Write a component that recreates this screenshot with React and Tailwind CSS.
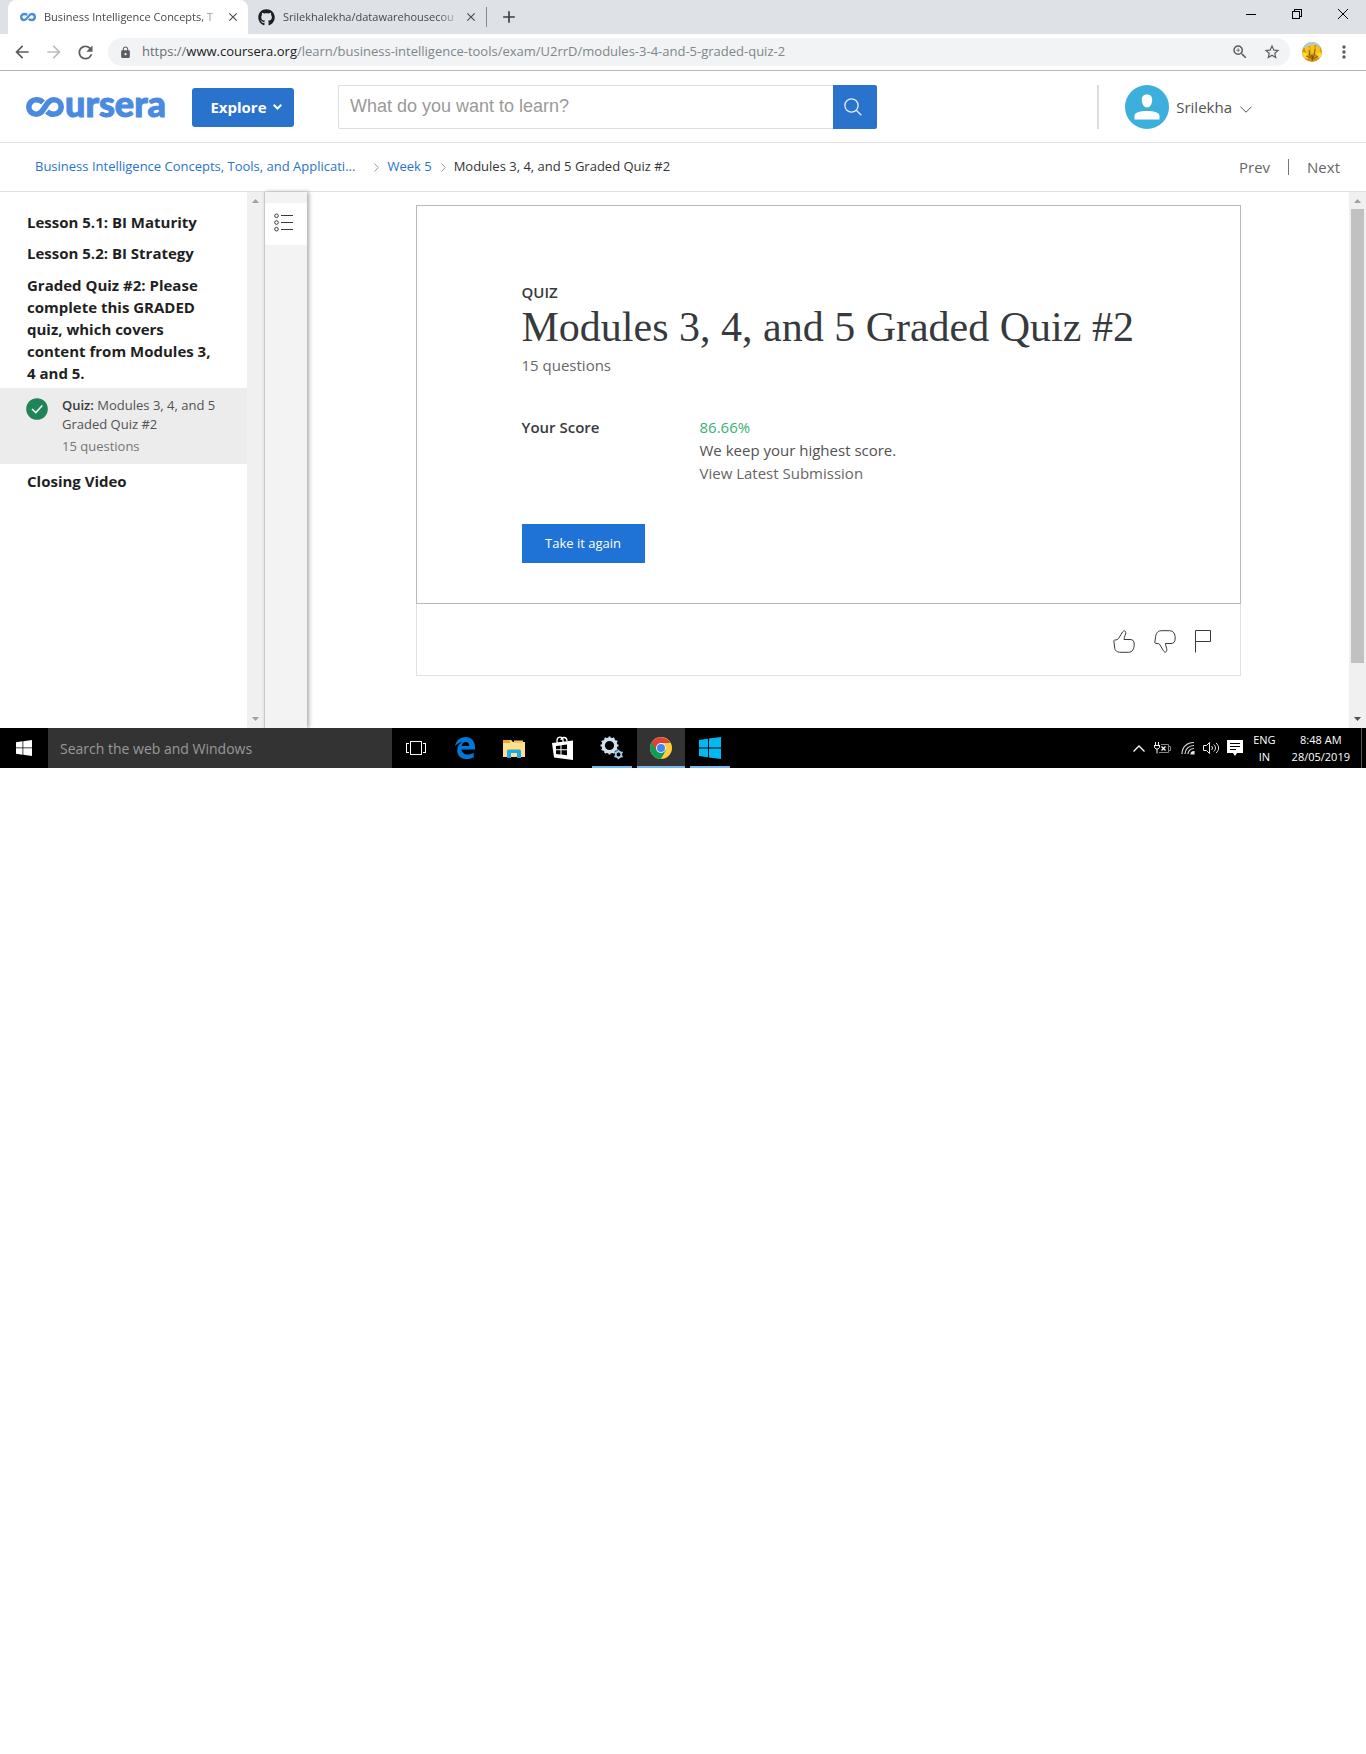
import React from "react";
import {
  MdArrowBack,
  MdArrowForward,
  MdRefresh,
  MdLock,
  MdZoomIn,
  MdStarBorder,
  MdMoreVert,
  MdClose,
  MdAdd,
} from "react-icons/md";
import { FaGithub } from "react-icons/fa";

const sans = "font-['Open_Sans',sans-serif]";

function Infinity({ className }) {
  return (
    <svg className={className} viewBox="0 0 38 20" fill="none" stroke="currentColor" strokeWidth="5.6" aria-hidden="true">
      <path d="M17 5.400C15.200 3.600 13 2.800 10.400 2.800C6 2.800 2.800 5.900 2.800 10C2.800 14.100 6 17.200 10.400 17.200C18.600 17.200 19.400 2.800 27.600 2.800C32 2.800 35.200 5.900 35.200 10C35.200 14.100 32 17.200 27.600 17.200C25 17.200 22.800 16.200 21 14.400" />
    </svg>
  );
}

function Tab({ icon, title, active }) {
  return (
    <div
      className={
        active
          ? "flex h-[34px] w-60 items-center rounded-t-lg bg-white pr-2 pl-3"
          : "flex h-[34px] w-[238px] items-center pr-2 pl-[10px]"
      }
    >
      {icon}
      <span className="ml-2 min-w-0 flex-1 overflow-hidden text-[11px] whitespace-nowrap text-[#45484c] [mask-image:linear-gradient(to_right,black_88%,transparent)]">
        {title}
      </span>
      <button aria-label={"Close " + title} className="ml-1 text-[#4a4d51]">
        <MdClose size={14} />
      </button>
    </div>
  );
}

function BrowserChrome() {
  return (
    <header>
      <div className="flex h-[34px] bg-[#dee1e6] pl-2">
        <Tab active title="Business Intelligence Concepts, T" icon={<Infinity className="h-4 w-4 shrink-0 text-[#4a8fd4]" />} />
        <Tab title="Srilekhalekha/datawarehousecou" icon={<FaGithub size={17} className="shrink-0 text-[#1b1f23]" />} />
        <div className="my-auto h-5 w-px bg-[#85888c]" />
        <button aria-label="New tab" className="ml-3 text-[#3c4043]">
          <MdAdd size={20} />
        </button>
        <div className="ml-auto flex h-7">
          <button aria-label="Minimize" className="flex w-[46px] items-center justify-center">
            <svg width="10" height="10" stroke="#000" shapeRendering="crispEdges"><path d="M0 5.500H10" /></svg>
          </button>
          <button aria-label="Restore" className="flex w-[46px] items-center justify-center">
            <svg width="10" height="10" fill="none" stroke="#000" shapeRendering="crispEdges"><path d="M.5 2.500H7.500V9.500H.5ZM2.500 2.500V.5H9.500V7.500H7.500" /></svg>
          </button>
          <button aria-label="Close window" className="flex w-[46px] items-center justify-center">
            <svg width="10" height="10" stroke="#000"><path d="M0 0L10 10M10 0L0 10" /></svg>
          </button>
        </div>
      </div>
      <div className="box-content flex h-9 items-center border-b border-[#b4b5b7] bg-white px-3 text-[#5a5d61]">
        <button aria-label="Back"><MdArrowBack size={20} /></button>
        <button aria-label="Forward" className="ml-3 text-[#bcbec1]"><MdArrowForward size={20} /></button>
        <button aria-label="Reload" className="ml-[11px]"><MdRefresh size={21} /></button>
        <div className="ml-3 flex h-7 min-w-0 flex-1 items-center rounded-full bg-[#f1f3f4] pr-[9px] pl-[11px]">
          <MdLock size={13} className="shrink-0" />
          <div role="textbox" aria-label="Address" className="ml-[10px] flex-1 truncate text-[13px] text-[#80868b]">
            <span className="text-[#6b6f73]">https://</span>
            <span className="text-[#202124]">www.coursera.org</span>
            /learn/business-intelligence-tools/exam/U2rrD/modules-3-4-and-5-graded-quiz-2
          </div>
          <button aria-label="Zoom"><MdZoomIn size={18} /></button>
          <button aria-label="Bookmark" className="ml-[14px]"><MdStarBorder size={18} /></button>
        </div>
        <button aria-label="Profile" className="ml-3">
          <svg width="20" height="20" viewBox="0 0 20 20">
            <clipPath id="flower"><circle cx="10" cy="10" r="10" /></clipPath>
            <g clipPath="url(#flower)">
              <rect width="20" height="20" fill="#d8930f" />
              <path d="M0 0H20V7L14 3L8 4L0 7Z" fill="#a9cbe6" />
              <path d="M3 8C2 4 8 3 8 8L6 13ZM8 3L12 2L13 11L9 12ZM14 4C18 3 20 9 17 13L13 12Z" fill="#f7c418" />
              <path d="M0 10L5 11L6 17L2 16ZM14 12L20 10L18 17Z" fill="#ffd92b" />
              <path d="M7 8L8 15M13 7L12 14M4 14L9 16M16 14L11 17" stroke="#8f5c06" />
              <path d="M9 13L12 14L10 20Z" fill="#6b5a10" />
            </g>
          </svg>
        </button>
        <button aria-label="Menu" className="ml-3"><MdMoreVert size={20} /></button>
      </div>
    </header>
  );
}

function SiteHeader() {
  return (
    <div className="flex items-center border-b border-[#e1e1e1] pt-[14px] pr-[114px] pb-[13px] pl-[26px]">
      <a href="#home" aria-label="coursera" className="flex h-11 items-center text-[#4a8ae0]">
        <Infinity className="h-5 w-[38px]" />
        <span className="pb-[9px] pl-px font-['Lato',sans-serif] text-[36px] leading-9 font-black [-webkit-text-stroke:1px_currentColor]">ursera</span>
      </a>
      <button className="ml-[26px] flex h-[39px] w-[102px] items-center justify-center gap-1.5 rounded-[3px] bg-[#2a73cc] pl-1.5 text-[15px] font-bold text-white">
        Explore
        <svg width="9" height="6" viewBox="0 0 9 6" fill="none" stroke="currentColor" strokeWidth="2"><path d="M.7 .8L4.500 4.500L8.300 .8" /></svg>
      </button>
      <form className="ml-11 flex h-11 w-[539px] min-w-0">
        <input
          aria-label="Search"
          placeholder="What do you want to learn?"
          className="min-w-0 flex-1 rounded-l-xs border border-r-0 border-[#dedede] px-[11px] pb-0.5 font-['Liberation_Sans',sans-serif] text-lg placeholder:text-[#9a9a9a]"
        />
        <button type="button" aria-label="Submit search" className="flex w-11 items-center justify-center rounded-r-xs bg-[#2a73cc] pr-1">
          <svg width="18" height="18" viewBox="0 0 18 18" fill="none" stroke="#e5eefa" strokeWidth="1.300"><circle cx="7.500" cy="7.500" r="6.600" /><path d="M12 12L17.300 17.300" /></svg>
        </button>
      </form>
      <div className="ml-auto h-11 w-0.5 bg-[#dedede]" />
      <button className="ml-[26px] flex items-center text-[15px] text-[#525252]">
        <svg width="44" height="44" viewBox="0 0 44 44">
          <circle cx="22" cy="22" r="22" fill="#3cafdc" />
          <path d="M22 9.500C25.500 9.500 27.300 11.600 27.200 15C27.100 19 25 22.500 22 22.500C19 22.500 16.900 19 16.800 15C16.700 11.600 18.500 9.500 22 9.500ZM9.500 34.500V31C9.500 27.500 14 26 22 26C30 26 34.500 27.500 34.500 31V34.500Z" fill="#fff" />
        </svg>
        <span className="ml-[7px]">Srilekha</span>
        <svg className="mt-1 ml-2" width="12" height="7" viewBox="0 0 12 7" fill="none" stroke="currentColor" strokeWidth="1"><path d="M.5 .8L6 6.200L11.500 .8" /></svg>
      </button>
    </div>
  );
}

function Crumb() {
  return (
    <svg width="5" height="9" viewBox="0 0 5 9" fill="none" stroke="#9b9b9b" aria-hidden="true"><path d="M.5 .5L4.300 4.500L.5 8.500" /></svg>
  );
}

function Breadcrumbs() {
  return (
    <nav className="box-content flex h-12 items-center border-b border-[#e1e1e1] pr-[26px] pl-[35px] text-[13px] text-[#333]">
      <a href="#course" className="text-[#2a73cc]">Business Intelligence Concepts, Tools, and Applicati...</a>
      <span className="mr-2 ml-[19px]"><Crumb /></span>
      <a href="#week" className="text-[#2a73cc]">Week 5</a>
      <span className="mr-2 ml-[9px]"><Crumb /></span>
      <span>Modules 3, 4, and 5 Graded Quiz #2</span>
      <a href="#prev" className="ml-auto text-[15px] text-[#666]">Prev</a>
      <span className="mx-[18px] h-4 w-px bg-[#757575]" />
      <a href="#next" className="text-[15px] text-[#666]">Next</a>
    </nav>
  );
}

function Arrow({ up, dark }) {
  return (
    <svg width="17" height="17" viewBox="0 0 17 17" fill={dark ? "#505050" : "#a0a0a0"} aria-hidden="true">
      {up ? <path d="M5 11L8.500 7L12 11Z" /> : <path d="M5 6L8.500 10L12 6Z" />}
    </svg>
  );
}

function Sidebar() {
  return (
    <aside className="flex w-[307px] shrink-0">
      <div className="min-w-0 flex-1 pt-[19px] text-[15px] leading-[22px] font-bold text-[#1f1f1f]">
        <p className="px-[27px]">Lesson 5.1: BI Maturity</p>
        <p className="mt-[9px] px-[27px]">Lesson 5.2: BI Strategy</p>
        <p className="mt-[10px] px-[27px]">Graded Quiz #2: Please complete this GRADED quiz, which covers content from Modules 3, 4 and 5.</p>
        <a href="#quiz" className="mt-1 flex bg-[#ececec] py-2 pr-5 pl-[26px] text-[13px] leading-[19px] font-normal text-[#525252]">
          <svg className="mt-0.5 shrink-0" width="22" height="22" viewBox="0 0 22 22" fill="none"><circle cx="11" cy="11" r="10.800" fill="#208556" /><path d="M6 11L9.800 14.600L16.300 7.500" stroke="#fff" strokeWidth="1.500" /></svg>
          <span className="ml-[14px]">
            <b className="font-semibold text-[#373a3c]">Quiz:</b> Modules 3, 4, and 5 Graded Quiz #2
            <span className="mt-[3px] block text-[#757575]">15 questions</span>
          </span>
        </a>
        <p className="mt-[6px] px-[27px]">Closing Video</p>
      </div>
      <div className="flex flex-col justify-between bg-[#f0f0f0]">
        <Arrow up />
        <Arrow />
      </div>
      <div className="w-[43px] border-l border-[#c8c8c8] bg-[#f3f3f3] pt-[11px] shadow-[2px_0_4px_#aaa]">
        <button aria-label="Outline" className="flex h-[42px] w-full items-start justify-center rounded-xs bg-white pt-[10px] pr-1">
          <svg width="20" height="19" viewBox="0 0 20 19" fill="none" stroke="#373a3c">
            <circle cx="2.500" cy="2.800" r="1.800" /><circle cx="2.500" cy="9.500" r="1.800" /><circle cx="2.500" cy="16.200" r="1.800" />
            <path d="M7 2.500H19M7 9.500H19M7 16.500H19" />
          </svg>
        </button>
      </div>
    </aside>
  );
}

function QuizPanel() {
  return (
    <main className="min-w-0 flex-1 pt-[13px]">
      <div className="mx-auto max-w-[825px]">
        <section className="border border-[#bababa] px-[105px] pt-[76px] pb-10 text-[15px] text-[#373a3c]">
          <h2 className="leading-[21px] font-semibold">QUIZ</h2>
          <h1 className="font-['Liberation_Serif',serif] text-[42px] leading-[48px] whitespace-nowrap">Modules 3, 4, and 5 Graded Quiz #2</h1>
          <p className="mt-0.5 leading-6 text-[#666]">15 questions</p>
          <dl className="mt-[39px] flex leading-[23px]">
            <dt className="w-[178px] font-semibold">Your Score</dt>
            <dd>
              <p className="text-[#3ab176]">86.66%</p>
              <p className="text-[#525252]">We keep your highest score.</p>
              <a href="#submission" className="block text-[#666]">View Latest Submission</a>
            </dd>
          </dl>
          <button className="mt-[39px] flex h-[39px] w-[123px] items-center justify-center bg-[#2073d6] text-[13px] font-medium text-white">Take it again</button>
        </section>
        <div className="flex h-[72px] items-center justify-end gap-[19px] border border-t-0 border-[#e1e1e1] pt-1 pr-7 text-[#373a3c]">
          <button aria-label="Like">
            <svg width="22" height="23" viewBox="0 0 22 23" fill="none" stroke="currentColor"><path d="M.8 10.500C1 9.600 4 10.600 5.500 8.600L9.500 2C10.500 .2 12.800 .8 12.800 2.500C12.800 4.500 11.300 6.500 11 9.500H17C20 9.500 21.200 11 21.200 14C21.200 19 19.500 22.300 15.500 22.300H8C4 22.300 1.800 21 1.600 17Z" /></svg>
          </button>
          <button aria-label="Dislike">
            <svg width="22" height="23" viewBox="0 0 22 23" fill="none" stroke="currentColor"><path d="M.8 12.800L1.600 6.500C2.500 2 4.500 .7 8 .7H15.500C19.500 .7 21.200 4 21.200 8C21.200 11.500 20 13.500 17 13.500H11.500C11.500 16 13 18 12.800 20C12.600 22.600 10.500 22.800 9.500 20.800L5.500 14.200C4.500 12.800 1.500 14 .8 12.800Z" /></svg>
          </button>
          <button aria-label="Flag">
            <svg width="17" height="23" viewBox="0 0 17 23" fill="none" stroke="currentColor"><path d="M.5 22.500V.5H15.500V11.500H.5" /></svg>
          </button>
        </div>
      </div>
    </main>
  );
}

function TaskButton({ label, children, state }) {
  return (
    <button
      aria-label={label}
      className={"flex h-10 w-12 flex-col items-center " + (state === "active" ? "bg-[#333]" : "")}
    >
      <span className="flex flex-1 items-center">{children}</span>
      {state && <span className={"-mt-0.5 h-0.5 bg-[#76b9ed] " + (state === "active" ? "w-12" : "w-10")} />}
    </button>
  );
}

function WindowsMark({ size, fill }) {
  return (
    <svg width={size} height={size} viewBox="0 0 22 22" fill={fill}><path d="M0 3L9 1.800V10.400H0ZM10 1.600L22 0V10.400H10ZM0 11.500H9V20.200L0 19ZM10 11.500H22V22L10 20.400Z" /></svg>
  );
}

const teeth = [0, 30, 60, 90, 120, 150, 180, 210, 240, 270, 300, 330];

function Gears() {
  return (
    <svg width="24" height="24" viewBox="0 0 24 24" fill="none">
      <g stroke="#cfe0ee">
        <circle cx="9.500" cy="9.500" r="6.300" strokeWidth="3.400" />
        {teeth.map((a) => <path key={a} d="M9.500 .5V3" strokeWidth="2" transform={`rotate(${a} 9.500 9.500)`} />)}
      </g>
      <g stroke="#a9cbe6">
        <circle cx="18.500" cy="18.500" r="2.800" strokeWidth="1.700" />
        {teeth.filter((a) => a % 60 === 0).map((a) => <path key={a} d="M18.500 13.800V15.500" strokeWidth="1.800" transform={`rotate(${a} 18.500 18.500)`} />)}
      </g>
    </svg>
  );
}

function Taskbar() {
  return (
    <footer className="flex h-10 items-center bg-black text-white">
      <button aria-label="Start" className="flex w-12 shrink-0 justify-center"><WindowsMark size={16} fill="#fff" /></button>
      <input aria-label="Search the web and Windows" placeholder="Search the web and Windows" className="h-10 w-[344px] bg-[#333] px-3 text-sm placeholder:text-[#999]" />
      <div className="flex gap-px">
        <TaskButton label="Task view">
          <svg width="20" height="14" fill="none" stroke="#fff" shapeRendering="crispEdges"><path d="M4.500 .5H15.500V13.500H4.500ZM3 2.500H.5V11.500H3M17 2.500H19.500V11.500H17" /></svg>
        </TaskButton>
        <TaskButton label="Edge">
          <svg width="20" height="22" viewBox="0 0 20 22" fill="#0078d7"><path d="M0 9.500C1 3.500 5 0 10.500 0C16.500 0 20 4.500 20 10V12.500H6.500C6.800 16 9.500 17.600 12.600 17.600C15 17.600 17 16.900 18.700 15.800V20.200C16.600 21.400 14.400 22 11.800 22C6 22 2.200 18.600 2.200 13.200C2.200 9.500 4.200 6.500 7.500 5C4.200 5.200 1.600 7 0 9.500ZM6.600 9H14.300C14.200 6.600 13 5 10.700 5C8.400 5 7 6.700 6.600 9Z" /></svg>
        </TaskButton>
        <TaskButton label="File Explorer">
          <svg width="22" height="19" viewBox="0 0 22 19"><path d="M0 1H8L10 3H22V18H0Z" fill="#ffe08a" /><path d="M0 1H7V4H0Z" fill="#e8a92e" /><path d="M11 1.500H20V4H11Z" fill="#f4c95d" /><path d="M4 19V12Q4 10.500 5.500 10.500H16.500Q18 10.500 18 12V19H14V14H8V19Z" fill="#1fa9e6" /></svg>
        </TaskButton>
        <TaskButton label="Store">
          <svg width="22" height="24" viewBox="0 0 22 24"><path d="M0 7L21 4.500V24L2 21.500Z" fill="#fff" /><path d="M5 7V4.500C5 0 11 0 11 4.500V6M9 4C9.500 .5 15 .5 15 5" fill="none" stroke="#fff" strokeWidth="1.300" /><path d="M4 10L8.500 9.400V13.300H4ZM9.500 9.200L15 8.500V13.300H9.500ZM4 14.300H8.500V18.400L4 17.900ZM9.500 14.300H15V19.200L9.500 18.500Z" /></svg>
        </TaskButton>
        <TaskButton label="Services" state="open"><Gears /></TaskButton>
        <TaskButton label="Chrome" state="active">
          <svg width="22" height="22" viewBox="0 0 22 22">
            <circle cx="11" cy="11" r="11" fill="#ffcd40" />
            <path d="M11 11L1.500 5.500A11 11 0 0 0 11 22L16 13Z" fill="#0f9d58" />
            <path d="M1.500 5.500A11 11 0 0 1 20.500 6H11L6.500 13.500Z" fill="#db4437" />
            <circle cx="11" cy="11" r="5" fill="#f1f1f1" /><circle cx="11" cy="11" r="4" fill="#4285f4" />
          </svg>
        </TaskButton>
        <TaskButton label="Windows" state="open"><WindowsMark size={22} fill="#00b9f2" /></TaskButton>
      </div>
      <div className="mr-1 ml-auto flex h-10 items-center border-r border-[#555] pr-[11px] text-[11px] leading-[17px]">
        <svg width="12" height="7" fill="none" stroke="#fff" strokeWidth="1.300"><path d="M.5 6.500L6 1L11.500 6.500" /></svg>
        <svg className="ml-[9px]" width="17" height="12" viewBox="0 0 17 12" fill="none">
          <path d="M1.500 0V3M4.500 0V3M0 3.500H6M.5 3.500V5.500L2 7H4L5.500 5.500V3.500M3 7V11.500" stroke="#f5f5f5" />
          <path d="M7 2.500H14.500V10.500H5M14.500 4.500H16.500V8.500H14.500" stroke="#858585" />
          <path d="M7.500 4.500L11.500 8.500M11.500 4.500L7.500 8.500" stroke="#fff" strokeWidth="1.200" />
        </svg>
        <svg className="ml-[10px]" width="14" height="14" fill="none" stroke="#ddd" strokeWidth="1.200"><path d="M1 13C1 6 6 1.500 13 1.500M4 13C4 8 8 4.500 13 4.500M7 13C7 10 9.500 7.500 13 7.500" /><path d="M10 13C10 11.500 11.500 10.500 13 10.500V13Z" fill="#fff" /></svg>
        <svg className="ml-2" width="17" height="14" fill="none" stroke="#eee"><path d="M.5 4.500H3.500L6.500 1.500V12.500L3.500 9.500H.5ZM8.500 5C9.800 6 9.800 8 8.500 9M10.800 3.500C13 5.500 13 8.500 10.800 10.500M13 2C16.500 5 16.500 9 13 12" /></svg>
        <svg className="ml-[7px]" width="16" height="16"><path d="M0 0H16V13H10L8 16L6 13H0Z" fill="#fff" /><path d="M3 3.500H13M3 6.500H13M3 9.500H9" stroke="#000" /></svg>
        <span className="ml-[10px] text-center">ENG<br />IN</span>
        <span className="ml-4 text-center">8:48 AM<br />28/05/2019</span>
      </div>
    </footer>
  );
}

export default function App() {
  return (
    <div className={"bg-white " + sans}>
      <BrowserChrome />
      <SiteHeader />
      <Breadcrumbs />
      <div className="flex min-h-[536px]">
        <Sidebar />
        <QuizPanel />
        <div className="flex w-[17px] flex-col bg-[#f0f0f0]">
          <Arrow up />
          <div className="mx-0.5 grow-[454] bg-[#c1c1c1]" />
          <div className="grow-[48]" />
          <Arrow dark />
        </div>
      </div>
      <Taskbar />
    </div>
  );
}
